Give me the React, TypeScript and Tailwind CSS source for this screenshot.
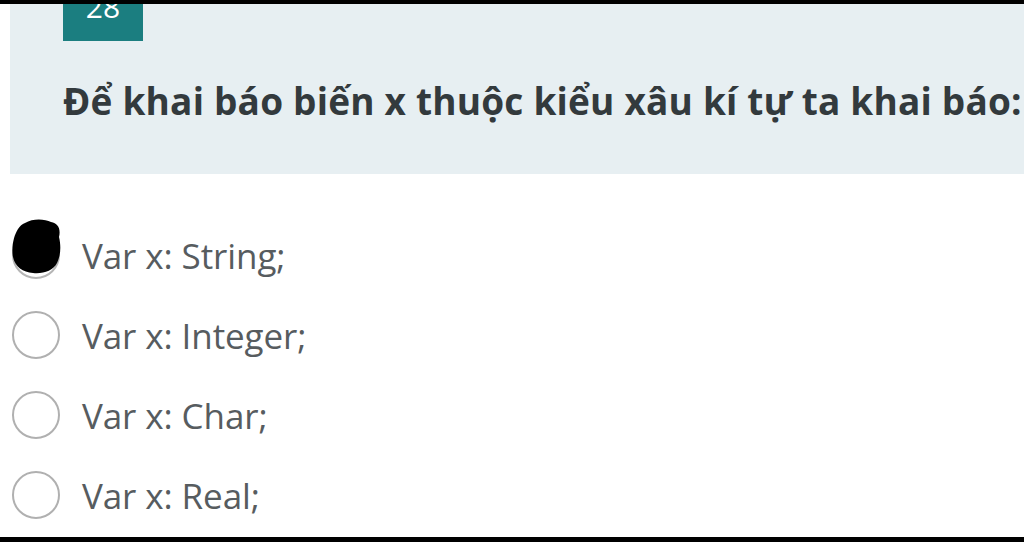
const options = [
  { label: "Var x: String;", picked: true },
  { label: "Var x: Integer;", picked: false },
  { label: "Var x: Char;", picked: false },
  { label: "Var x: Real;", picked: false },
];

function Radio({ picked }: { picked: boolean }) {
  if (picked) {
    return (
      <div className="relative w-[48px] h-[48px]">
        <div className="absolute inset-0 rounded-full border-2 border-[#b5b5b5]" />
        <svg className="absolute -top-[14px] -left-[1px]" width="52" height="58" viewBox="0 0 52 58">
          <path
            d="M14 6 C22 1 34 2 40 5 C47 6 50 12 48 20 C50 28 50 38 46 46 C42 54 32 57 22 56 C12 55 4 50 2 40 C0 30 3 18 7 12 C9 9 11 7 14 6 Z"
            fill="#000"
          />
        </svg>
      </div>
    );
  }
  return <div className="w-[48px] h-[48px] rounded-full border-2 border-[#b0b0b0] bg-white" />;
}

export default function App() {
  return (
    <div className="w-[1024px] h-[542px] bg-white flex flex-col overflow-hidden" style={{ fontFamily: '"Open Sans", "Noto Sans", sans-serif' }}>
      <div className="h-[4px] bg-black shrink-0" />

      <div className="ml-[10px] h-[170px] bg-[#e7eff2] pl-[53px] shrink-0 overflow-hidden">
        <div className="w-[80px] h-[37px] bg-[#1b7e80] overflow-hidden flex justify-center">
          <span className="text-white text-[30px] leading-none -mt-[12px]">28</span>
        </div>
        <h1 className="mt-[41px] text-[37px] font-bold text-[#333a3d] whitespace-nowrap leading-none tracking-[0.2px]">
          Để khai báo biến x thuộc kiểu xâu kí tự ta khai báo:
        </h1>
      </div>

      <div className="flex flex-col pl-[12px] pt-[57px] gap-[32px]">
        {options.map((o) => (
          <div key={o.label} className="flex items-center gap-[22px] h-[48px]">
            <Radio picked={o.picked} />
            <span className="text-[35px] font-normal text-[#575c5f] tracking-[-0.1px] leading-none">{o.label}</span>
          </div>
        ))}
      </div>

      <div className="mt-auto h-[5px] bg-black shrink-0" />
    </div>
  );
}
